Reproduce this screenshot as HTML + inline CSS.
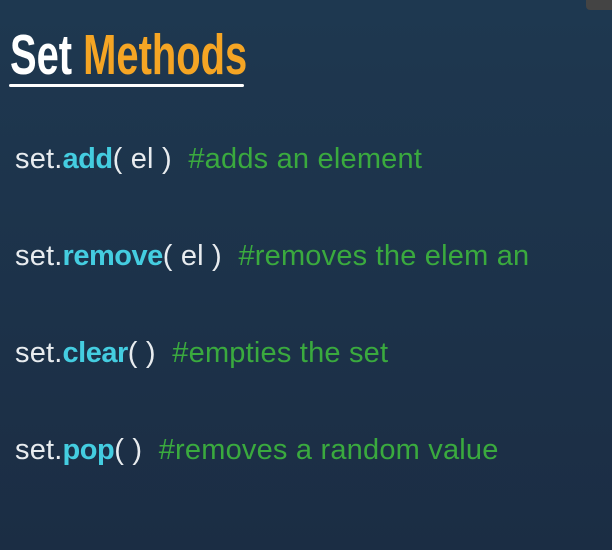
<!DOCTYPE html>
<html><head><meta charset="utf-8"><style>
html,body{margin:0;padding:0}
body{width:612px;height:550px;overflow:hidden;background:linear-gradient(#1e3850,#1b2d44);position:relative;font-family:"Liberation Sans",sans-serif}
.title{position:absolute;left:10px;top:24px;font-family:"Liberation Sans",sans-serif;font-weight:bold;font-size:57px;line-height:62px;color:#fff;transform:scaleX(0.70);transform-origin:left;white-space:nowrap}
.title span{color:#f5a524}
.ul{position:absolute;left:9px;top:84px;width:235px;height:3px;background:#fff;border-radius:2px}
.ln{position:absolute;left:15px;font-size:29px;color:#e8ecef;white-space:nowrap;line-height:30px;letter-spacing:0.2px}
.m{color:#44cde0;font-weight:bold;letter-spacing:-0.5px}
.c{color:#3aaa3e}
</style></head><body>
<div style="position:absolute;right:0;top:0;width:26px;height:10px;background:#444;border-radius:0 0 0 4px"></div>
<div class="title">Set <span>Methods</span></div>
<div class="ul"></div>
<div class="ln" style="top:144px">set.<span class="m">add</span>( el )&nbsp; <span class="c">#adds an element</span></div>
<div class="ln" style="top:241px">set.<span class="m">remove</span>( el )&nbsp; <span class="c">#removes the elem an</span></div>
<div class="ln" style="top:338px">set.<span class="m">clear</span>( )&nbsp; <span class="c">#empties the set</span></div>
<div class="ln" style="top:435px">set.<span class="m">pop</span>( )&nbsp; <span class="c">#removes a random value</span></div>
</body></html>
